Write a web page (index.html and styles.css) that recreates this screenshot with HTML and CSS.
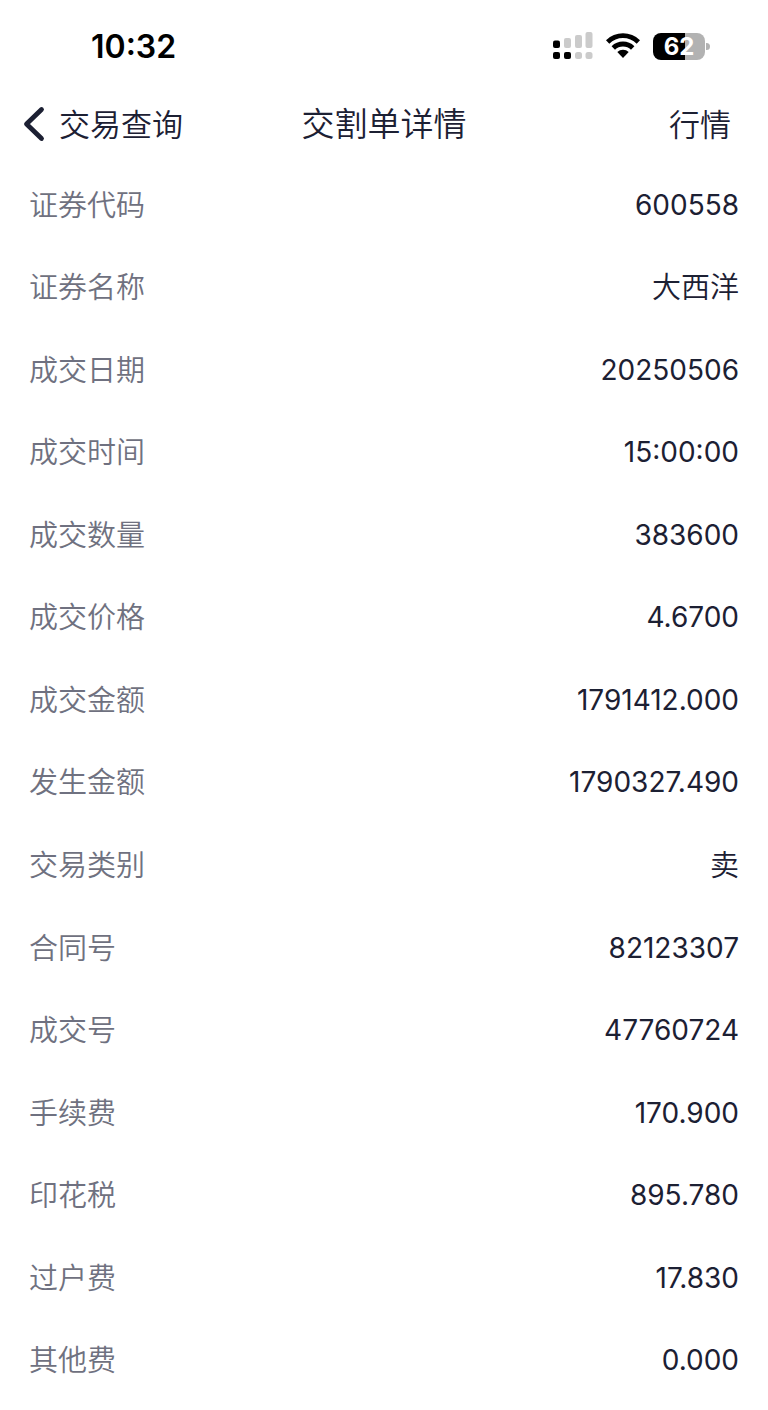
FILE: index.html
```
<!DOCTYPE html>
<html lang="zh-CN">
<head>
  <meta charset="UTF-8" />
  <meta name="viewport" content="width=device-width, initial-scale=1.0"/>
  <title>交割单详情</title>
  <link rel="stylesheet" href="styles.css">
</head>
<body>
  <div class="status-bar">
    <span class="time">10:32</span>
    <div class="status-icons">
      <!-- dual SIM signal -->
      <svg class="signal" width="40" height="28" viewBox="0 0 40 28" aria-hidden="true">
        <g fill="#cbcbcb">
          <rect x="11" y="6" width="7" height="10" rx="2"/>
          <rect x="22" y="3" width="7" height="13" rx="2"/>
          <rect x="32.500" y="0" width="7" height="16" rx="2"/>
          <rect x="22" y="20" width="7" height="7" rx="2.500"/>
          <rect x="32.500" y="20" width="7" height="7" rx="2.500"/>
        </g>
        <rect x="0" y="8.500" width="7" height="7.500" rx="2"/>
        <rect x="0" y="20" width="7" height="7" rx="2"/>
        <rect x="11" y="20" width="7" height="7" rx="2"/>
      </svg>
      <svg class="wifi" width="36" height="28" viewBox="0 0 36 28" aria-hidden="true">
        <path d="M1 8.200a24.500 24.500 0 0 1 34 0l-3.300 3.500a19.600 19.600 0 0 0-27.400 0z"/>
        <path d="M6.600 14.200a16.400 16.400 0 0 1 22.800 0l-3.400 3.500a11.600 11.600 0 0 0-16 0z"/>
        <path d="M12.300 20.100a8.200 8.200 0 0 1 11.400 0L18 26z"/>
      </svg>
      <div class="battery"><span class="battery-level">62</span></div>
    </div>
  </div>

  <header class="nav">
    <a href="#" class="back">
      <svg width="22" height="36" viewBox="0 0 22 36" aria-hidden="true">
        <path d="M18.500 3.500L3.500 18l15 14.500" fill="none" stroke="currentColor" stroke-width="4.800" stroke-linecap="round" stroke-linejoin="round"/>
      </svg>
      交易查询
    </a>
    <h1>交割单详情</h1>
    <a href="#" class="quote">行情</a>
  </header>

  <dl class="details">
    <div class="row"><dt>证券代码</dt><dd>600558</dd></div>
    <div class="row"><dt>证券名称</dt><dd class="cjk">大西洋</dd></div>
    <div class="row"><dt>成交日期</dt><dd>20250506</dd></div>
    <div class="row"><dt>成交时间</dt><dd>15:00:00</dd></div>
    <div class="row"><dt>成交数量</dt><dd>383600</dd></div>
    <div class="row"><dt>成交价格</dt><dd>4.6700</dd></div>
    <div class="row"><dt>成交金额</dt><dd>1791412.000</dd></div>
    <div class="row"><dt>发生金额</dt><dd>1790327.490</dd></div>
    <div class="row"><dt>交易类别</dt><dd class="cjk">卖</dd></div>
    <div class="row"><dt>合同号</dt><dd>82123307</dd></div>
    <div class="row"><dt>成交号</dt><dd>47760724</dd></div>
    <div class="row"><dt>手续费</dt><dd>170.900</dd></div>
    <div class="row"><dt>印花税</dt><dd>895.780</dd></div>
    <div class="row"><dt>过户费</dt><dd>17.830</dd></div>
    <div class="row"><dt>其他费</dt><dd>0.000</dd></div>
  </dl>
</body>
</html>
```
FILE: styles.css
```
* { margin: 0; padding: 0; box-sizing: border-box; }

body {
  min-height: 100vh;
  display: flex; flex-direction: column;
  padding-bottom: 8px;
  background: #fff; color: #1c2033;
  font-family: Inter, "Noto Sans CJK SC", sans-serif;
  line-height: 41px;
}

a { color: inherit; text-decoration: none; }

.status-bar {
  display: flex; justify-content: space-between; align-items: center;
  height: 92px; padding: 0 58px 0 91px;
  color: #000;
}
.time { font-size: 32px; font-weight: 600; }
.status-icons { display: flex; align-items: center; gap: 12px; }

.battery {
  position: relative;
  width: 52px; height: 27px; margin-right: 5px;
  border-radius: 8px;
  background: linear-gradient(to right, #000 62%, #b2b2b2 62%);
  color: #fff; text-align: center;
}
.battery::after {
  content: ""; position: absolute; top: 10px; right: -5px;
  width: 4px; height: 7px;
  border-radius: 0 4px 4px 0; background: #b2b2b2;
}
.battery-level { display: block; font-size: 24px; font-weight: 700; line-height: 27px; }

.nav {
  display: grid; grid-template-columns: 1fr auto 1fr; align-items: center;
  height: 64px; margin-bottom: 8px; padding: 0 23px;
  font-size: 31px; font-weight: 350;
}
.nav h1 { font-size: 33px; font-weight: 350; }
.back { display: flex; align-items: center; gap: 14px; }
.quote { justify-self: end; margin-right: 14px; }

.details { flex: 1; display: flex; flex-direction: column; }
.row {
  flex: 1; display: flex; justify-content: space-between; align-items: center;
  padding: 0 29px; font-size: 29px;
}
.row dt { color: #6f7180; font-weight: 350; }
.row dd { font-size: 28px; }
.row .cjk { font-size: 29px; font-weight: 350; }
```
